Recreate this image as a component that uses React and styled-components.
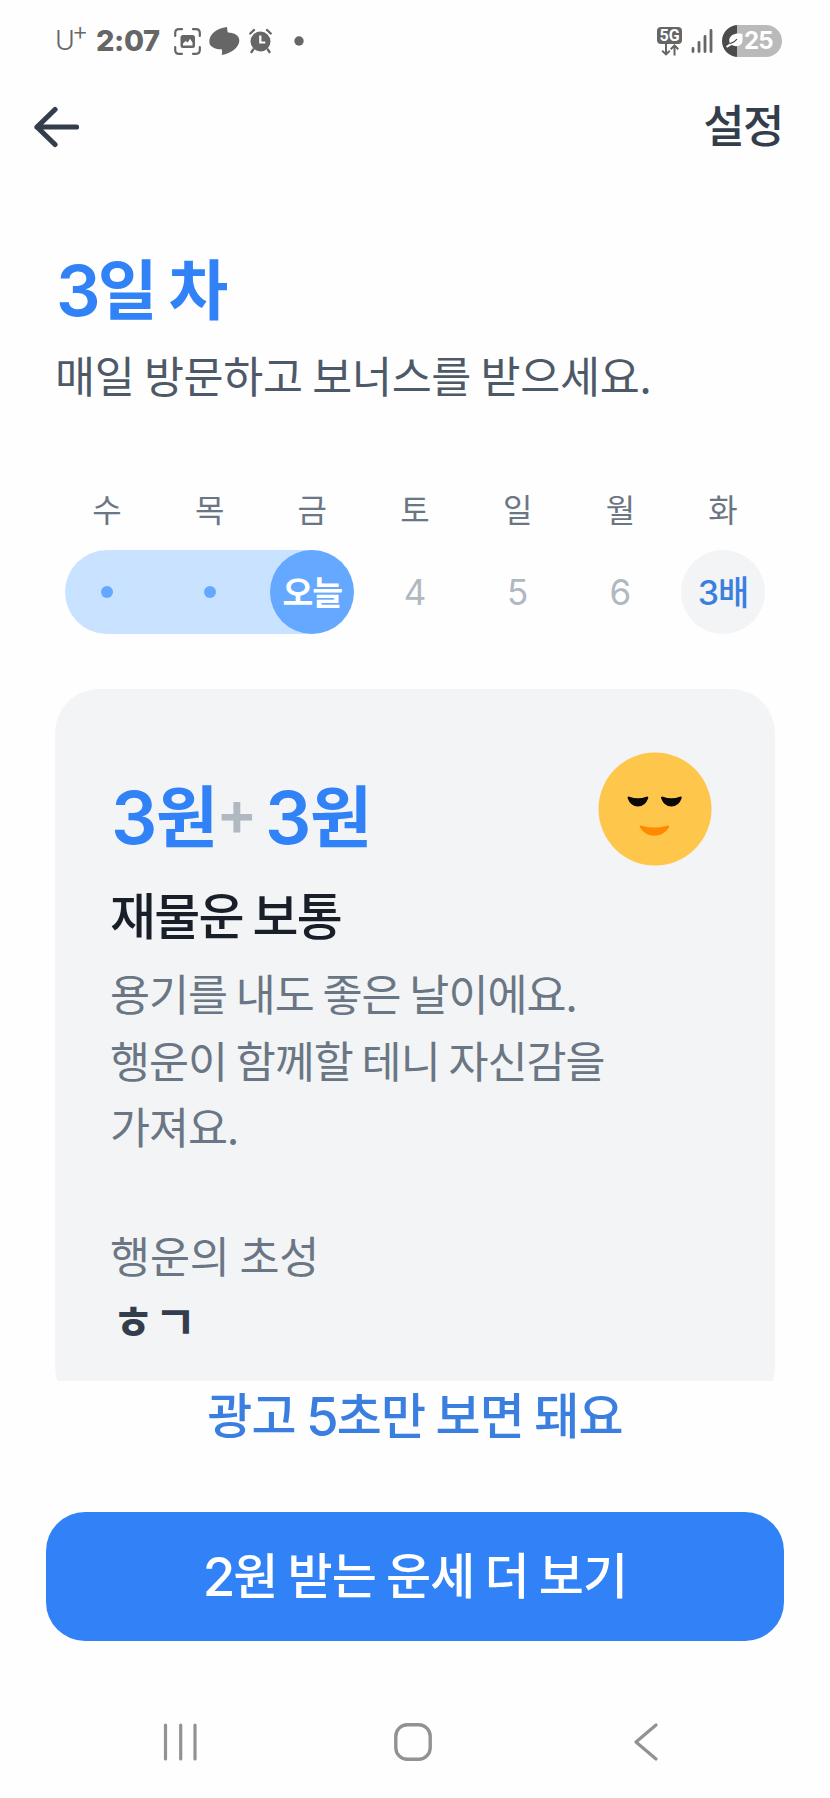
import React from "react";
import styled, { createGlobalStyle, css } from "styled-components";

const GlobalStyle = createGlobalStyle`
  * {
    box-sizing: border-box;
  }
  body {
    margin: 0;
    background: #fefefe;
    font-family: "Noto Sans CJK KR", "Noto Sans", sans-serif;
    -webkit-font-smoothing: antialiased;
  }
  h1, h2, p {
    margin: 0;
    font-weight: inherit;
  }
`;

const Screen = styled.div`
  display: flex;
  flex-direction: column;
  width: 830px;
  height: 1798px;
  overflow: hidden;
  background: #fefefe;
  white-space: nowrap;
`;

/* digits are a touch larger than the hangul next to them */
const Num = styled.span`
  font-family: Inter, sans-serif;
  font-size: 1.08em;
  line-height: 0;
  letter-spacing: -0.04em;
  vertical-align: -0.03em;
`;

/* status bar */

const StatusBar = styled.div`
  display: flex;
  justify-content: space-between;
  height: 82px;
  padding: 24px 48px 0 55px;
  color: #666;
  font-family: Inter, sans-serif;
`;

const StatusGroup = styled.div`
  display: flex;
  align-items: center;
  height: 34px;
`;

const Carrier = styled.span`
  display: flex;
  width: 41px;
  font-size: 27px;
  font-weight: 300;
  line-height: 36px;
`;

const CarrierPlus = styled.sup`
  margin-left: -3px;
  font-size: 25px;
  line-height: 17px;
  vertical-align: top;
`;

const Clock = styled.span`
  width: 78px;
  font-size: 29px;
  font-weight: 800;
  line-height: 34px;
  letter-spacing: -0.4px;
`;

const StatusIcon = styled.svg`
  display: block;
  flex: none;
  margin-right: ${(p) => p.$gap || 0}px;
`;

const Network = styled.div`
  display: flex;
  flex-direction: column;
  align-items: center;
  width: 25px;
  margin-right: 9px;
`;

const NetworkBadge = styled.span`
  width: 25px;
  height: 17px;
  border-radius: 4px;
  background: #666;
  color: #fff;
  font-family: Roboto, sans-serif;
  font-size: 16px;
  font-weight: 700;
  line-height: 18px;
  text-align: center;
`;

const Battery = styled.div`
  display: flex;
  align-items: center;
  width: 60px;
  height: 32px;
  border-radius: 16px;
  background: linear-gradient(90deg, #4b4b4b 15px, #bababa 15px);
  color: #fff;
  font-size: 24px;
  font-weight: 700;
  line-height: 32px;
  letter-spacing: -0.8px;
`;

/* header */

const TopBar = styled.header`
  display: flex;
  align-items: center;
  justify-content: space-between;
  height: 88px;
  padding: 0 47px 0 33px;
`;

const IconButton = styled.button`
  display: flex;
  padding: 0;
  border: 0;
  background: none;
`;

const BackButton = styled(IconButton)`
  margin-top: 2px;
`;

const SettingsButton = styled(IconButton)`
  margin-top: -5px;
  color: #333d4b;
  font-family: inherit;
  font-size: 45px;
  font-weight: 500;
  line-height: 60px;
  letter-spacing: -1.5px;
`;

const Heading = styled.section`
  padding: 77px 56px 0;
`;

const DayTitle = styled.h1`
  color: #3182f6;
  font-size: 65px;
  font-weight: 700;
  line-height: 78px;
  letter-spacing: -0.5px;
  word-spacing: -3px;

  ${Num} {
    font-weight: 600;
  }
`;

const Subtitle = styled.p`
  margin: 20px 0 0 -1px;
  color: #4e5968;
  font-size: 43.5px;
  line-height: 60px;
  letter-spacing: -0.3px;
`;

/* attendance week */

const Week = styled.section`
  margin: 82px 55px 0 55.6px;
`;

const WeekRow = styled.div`
  display: grid;
  grid-template-columns: repeat(7, 102.7px);
  justify-items: center;
`;

const Weekday = styled.span`
  height: 42px;
  color: #6b7684;
  font-size: 32px;
  line-height: 42px;
`;

const Track = styled(WeekRow)`
  margin-top: 21px;
  height: 84px;
  background: linear-gradient(#c9e2ff, #c9e2ff) 51.3px 0 / 205.4px 84px no-repeat;
`;

const Day = styled.span`
  display: flex;
  align-items: center;
  justify-content: center;
  width: 84px;
  height: 84px;
  border-radius: 50%;
  color: #b0b8c1;
  font-family: Inter, sans-serif;
  font-size: 35px;
  line-height: 84px;
  ${(p) =>
    p.$kind === "done" &&
    css`
      background: #c9e2ff;
    `}
  ${(p) =>
    p.$kind === "today" &&
    css`
      background: #64a8ff;
      color: #fff;
      font-family: "Noto Sans CJK KR", sans-serif;
      font-size: 33.5px;
      font-weight: 700;
      line-height: 80px;
      letter-spacing: -1px;
      padding-bottom: 3px;
    `}
  ${(p) =>
    p.$kind === "bonus" &&
    css`
      padding-top: 2px;
      background: #f2f4f6;
      color: #3a7fdf;
      font-family: Inter, "Noto Sans CJK KR", sans-serif;
      font-size: 34px;
      font-weight: 500;
      line-height: 82px;
      letter-spacing: -1px;
    `}
`;

const DoneDot = styled.i`
  width: 12px;
  height: 12px;
  border-radius: 50%;
  background: #64a8ff;
`;

/* fortune card */

const CardViewport = styled.section`
  height: 692px;
  margin: 55px 55px 0;
  overflow: hidden;
`;

const Card = styled.div`
  height: 722px;
  padding: 83px 57px 0 55px;
  border-radius: 44px;
  background: #f2f4f6;
`;

const CardTop = styled.div`
  display: flex;
  justify-content: space-between;
  height: 80px;
  padding-right: 6px;
`;

const Amount = styled.div`
  margin-left: 1px;
  color: #3182f6;
  font-size: 67.5px;
  font-weight: 700;
  line-height: 81px;

  ${Num} {
    font-weight: 600;
    letter-spacing: -0.02em;
  }
`;

const Plus = styled.span`
  display: inline-block;
  width: 47px;
  color: #b0b8c1;
  font-family: Inter, sans-serif;
  font-size: 62px;
  font-weight: 600;
  line-height: 0;
  text-indent: -2px;
  vertical-align: 7px;
`;

const Face = styled.svg`
  display: block;
  margin-top: -20px;
`;

const FortuneTitle = styled.h2`
  margin-top: 29px;
  color: #191f28;
  font-size: 50px;
  font-weight: 500;
  line-height: 64px;
  letter-spacing: -1.7px;
`;

const Description = styled.p`
  margin-top: 15px;
  color: #6b7684;
  font-size: 43.5px;
  line-height: 66.7px;
  letter-spacing: -1px;
`;

const LuckyLabel = styled.p`
  margin-top: 65px;
  color: #6b7684;
  font-size: 43.5px;
  line-height: 60px;
  letter-spacing: -0.1px;
`;

const LuckyInitials = styled.p`
  margin: 4px 0 0 2px;
  color: #333d4b;
  font-size: 46px;
  font-weight: 700;
  line-height: 60px;
`;

/* bottom call to action */

const AdNotice = styled.p`
  color: #3a7fdf;
  font-size: 49px;
  font-weight: 500;
  line-height: 64px;
  letter-spacing: -0.8px;
  text-align: center;
`;

const MoreButton = styled.button`
  flex: none;
  height: 129px;
  margin: 67px 46px 0;
  padding: 0 0 8px;
  border: 0;
  border-radius: 39px;
  background: #3182f6;
  color: #fff;
  font-family: inherit;
  font-size: 49px;
  font-weight: 500;
  letter-spacing: -0.9px;
`;

const NavBar = styled.nav`
  display: grid;
  grid-template-columns: 231.5px 239.5px 26px;
  margin-top: 82px;
  padding-left: 162px;
`;

const weekdays = ["수", "목", "금", "토", "일", "월", "화"];

const days = [
  { kind: "done" },
  { kind: "done" },
  { kind: "today", label: "오늘" },
  { label: "4" },
  { label: "5" },
  { label: "6" },
  { kind: "bonus", label: "3배" },
];

const Status = () => (
  <StatusBar>
    <StatusGroup>
      <Carrier>
        U<CarrierPlus>+</CarrierPlus>
      </Carrier>
      <Clock>2:07</Clock>
      <StatusIcon width="27" height="27" viewBox="0 0 27 27" $gap={8}>
        <path
          d="M1.2 8V5Q1.2 1.2 5 1.2H8M19 1.2h3Q25.8 1.2 25.8 5v3M25.8 19v3q0 3.8-3.8 3.8h-3M8 25.8H5Q1.2 25.8 1.2 22v-3"
          fill="none"
          stroke="#666"
          strokeWidth="2.2"
          strokeLinecap="round"
        />
        <rect x="6.5" y="7" width="14.5" height="13" rx="2.5" fill="#666" />
        <path d="M9 17.5v-2l2.6-2.5 2.2 1.5 2.2-3.7 2.5 3.7v3z" fill="#fefefe" />
      </StatusIcon>
      <StatusIcon width="31" height="28" viewBox="0 0 31 28" $gap={9}>
        <path
          d="M18 0C18.4 2.5 18.2 4.5 19 5.5C25.5 5.8 30.5 8.4 30.3 13.8C30 20.5 22.5 26.3 12.7 28C13.3 25.4 13.2 23.8 12.7 22.3C5.2 22.5.2 19.2.3 14.5C.5 7.2 7.3 1.5 18 0z"
          fill="#666"
        />
      </StatusIcon>
      <StatusIcon width="23" height="26" viewBox="0 0 23 26" $gap={22}>
        <circle cx="11.5" cy="13.5" r="10" fill="#666" />
        <path
          d="M1.3 5.5L5 2M21.7 5.5L18 2M4.2 21.5L2.5 24M18.8 21.5l1.7 2.5"
          stroke="#666"
          strokeWidth="2.4"
          strokeLinecap="round"
        />
        <path d="M11.3 7.5v7h5" fill="none" stroke="#fefefe" strokeWidth="2.2" />
      </StatusIcon>
      <StatusIcon width="10" height="10" viewBox="0 0 10 10">
        <circle cx="5" cy="5" r="4.7" fill="#666" />
      </StatusIcon>
    </StatusGroup>
    <StatusGroup>
      <Network>
        <NetworkBadge>5G</NetworkBadge>
        <svg width="20" height="12" viewBox="0 0 20 12">
          <path
            d="M6 0v10M2.2 6.7L6 10.4l3.8-3.7M14.5 11.4V1.5M10.7 5.2l3.8-3.7 3.8 3.7"
            fill="none"
            stroke="#666"
            strokeWidth="2"
          />
        </svg>
      </Network>
      <StatusIcon width="22" height="24" viewBox="0 0 22 24" $gap={9}>
        <path
          d="M2 22.5v-3M8 22.5v-9M14 22.5V7.5M20 22.5V1.5"
          stroke="#666"
          strokeWidth="2.8"
          strokeLinecap="round"
        />
      </StatusIcon>
      <Battery>
        <StatusIcon width="22" height="18" viewBox="0 0 22 18">
          <path
            d="M20.5 2C13.5 .5 7.5 3 7.2 8.5c0 1 .3 2 .9 2.8L4 14.2l1.2 1.5 4.3-2.6c5.5 2.8 11.2.2 11-4.8z"
            fill="#fff"
          />
          <path d="M7.8 11.8C11 10.8 13.5 9.2 15 7" fill="none" stroke="#4b4b4b" strokeWidth="1.2" />
        </StatusIcon>
        25
      </Battery>
    </StatusGroup>
  </StatusBar>
);

const WeekTracker = () => (
  <Week>
    <WeekRow>
      {weekdays.map((name) => (
        <Weekday key={name}>{name}</Weekday>
      ))}
    </WeekRow>
    <Track>
      {days.map((day, i) => (
        <Day key={i} $kind={day.kind}>
          {day.kind === "done" ? <DoneDot /> : day.label}
        </Day>
      ))}
    </Track>
  </Week>
);

const CalmFace = () => (
  <Face width="114" height="114" viewBox="0 0 114 114">
    <circle cx="57" cy="57" r="56.5" fill="#ffc64c" />
    <path
      d="M29.5 46q0-2.2 2-1.2 8.500 3 16.800 0 2-1 2 1.200-3 8.500-10.400 8.500T29.500 46zM63 46q0-2.200 2-1.200 8.500 3 16.800 0 2-1 2 1.200-3 8.500-10.400 8.500T63 46z"
      fill="#0b0808"
    />
    <path
      d="M41.6 75.2Q41.400 73 43.800 73.700 56.500 77.500 69 73.700 71.400 73 71.200 75.200 65.500 83.800 56.500 83.800T41.600 75.200z"
      fill="#ff8a00"
    />
  </Face>
);

export const App = () => (
  <>
    <GlobalStyle />
    <Screen>
      <Status />
      <TopBar>
        <BackButton aria-label="뒤로">
          <svg width="48" height="42" viewBox="0 0 48 42">
            <path
              d="M43.5 21H4M22 3.5L4 21l18 17.5"
              fill="none"
              stroke="#333d4b"
              strokeWidth="5.2"
              strokeLinecap="round"
              strokeLinejoin="round"
            />
          </svg>
        </BackButton>
        <SettingsButton>설정</SettingsButton>
      </TopBar>
      <Heading>
        <DayTitle>
          <Num>3</Num>일 차
        </DayTitle>
        <Subtitle>매일 방문하고 보너스를 받으세요.</Subtitle>
      </Heading>
      <WeekTracker />
      <CardViewport>
        <Card>
          <CardTop>
            <Amount>
              <Num>3</Num>원<Plus>+</Plus>
              <Num>3</Num>원
            </Amount>
            <CalmFace />
          </CardTop>
          <FortuneTitle>재물운 보통</FortuneTitle>
          <Description>
            용기를 내도 좋은 날이에요.
            <br />
            행운이 함께할 테니 자신감을
            <br />
            가져요.
          </Description>
          <LuckyLabel>행운의 초성</LuckyLabel>
          <LuckyInitials>ㅎㄱ</LuckyInitials>
        </Card>
      </CardViewport>
      <AdNotice>
        광고 <Num>5</Num>초만 보면 돼요
      </AdNotice>
      <MoreButton>
        <Num>2</Num>원 받는 운세 더 보기
      </MoreButton>
      <NavBar>
        <svg width="38" height="38" viewBox="0 0 38 38">
          <path d="M3.5 2v34M18.7 2v34M33 2v34" stroke="#929292" strokeWidth="3.2" strokeLinecap="round" />
        </svg>
        <svg width="38" height="38" viewBox="0 0 38 38">
          <rect x="1.8" y="1.8" width="34.4" height="34.4" rx="11.5" fill="none" stroke="#929292" strokeWidth="3.4" />
        </svg>
        <svg width="26" height="38" viewBox="0 0 26 38">
          <path
            d="M23 2L3 19l20 17"
            fill="none"
            stroke="#929292"
            strokeWidth="3.2"
            strokeLinecap="round"
            strokeLinejoin="round"
          />
        </svg>
      </NavBar>
    </Screen>
  </>
);

export default App;
